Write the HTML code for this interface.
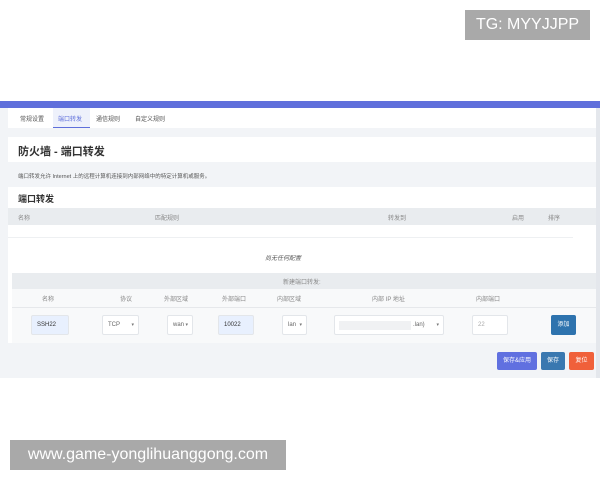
<!DOCTYPE html>
<html><head><meta charset="utf-8"><style>
*{margin:0;padding:0;box-sizing:border-box}
body{width:600px;height:480px;background:#fff;position:relative;overflow:hidden;font-family:"Liberation Sans","Noto Sans CJK SC",sans-serif;color:#333}
.a{position:absolute}
.t{font-size:6px;color:#888;position:absolute;white-space:nowrap}
.inp{position:absolute;height:20px;border:1px solid #e3e6ea;background:#fff;font-size:6px;color:#666;padding:6px 0 0 5px;border-radius:2px}
.blue{background:#e8f0fe;color:#333}
.car{position:absolute;right:4px;top:6px;font-size:5px;color:#777}
.btn{position:absolute;color:#fff;font-size:6px;text-align:center;border-radius:2px}
</style></head><body>
<div class="a" style="left:465px;top:10px;width:125px;height:30px;background:#a9a9a9;color:#fff;font-size:16px;line-height:30px;text-align:center">TG: MYYJJPP</div>
<div class="a" style="left:10px;top:440px;width:276px;height:30px;background:#a9a9a9;color:#fff;font-size:16px;line-height:30px;text-align:center">www.game-yonglihuanggong.com</div>

<div class="a" style="left:0;top:101px;width:600px;height:277px;background:#f2f4f7"></div>
<div class="a" style="left:0;top:101px;width:600px;height:7px;background:#5f6fdb"></div>
<div class="a" style="left:596px;top:108px;width:4px;height:270px;background:#e4e7ec"></div>

<div class="a" style="left:8px;top:108px;width:588px;height:20px;background:#fff"></div>
<div class="a" style="left:53px;top:108px;width:37px;height:20px;background:#eef1fb;border-bottom:1px solid #5f6fdb"></div>
<div class="t" style="left:20px;top:114px;color:#555">常规设置</div>
<div class="t" style="left:58px;top:114px;color:#5f6fdb">端口转发</div>
<div class="t" style="left:96px;top:114px;color:#555">通信规则</div>
<div class="t" style="left:135px;top:114px;color:#555">自定义规则</div>

<div class="a" style="left:8px;top:137px;width:588px;height:25px;background:#fff"></div>
<div class="a" style="left:18px;top:143px;font-size:11px;font-weight:bold;color:#333">防火墙 - 端口转发</div>
<div class="t" style="left:18px;top:172px;font-size:5.5px;color:#555">端口转发允许 Internet 上的远程计算机连接到内部网络中的特定计算机或服务。</div>

<div class="a" style="left:8px;top:187px;width:588px;height:156px;background:#fff"></div>
<div class="a" style="left:18px;top:192px;font-size:9px;font-weight:bold;color:#333">端口转发</div>
<div class="a" style="left:8px;top:208px;width:588px;height:17px;background:#e9ecef"></div>
<div class="t" style="left:18px;top:213px">名称</div>
<div class="t" style="left:155px;top:213px">匹配规则</div>
<div class="t" style="left:388px;top:213px">转发到</div>
<div class="t" style="left:512px;top:213px">启用</div>
<div class="t" style="left:548px;top:213px">排序</div>
<div class="a" style="left:8px;top:237px;width:565px;height:1px;background:#eef0f2"></div>
<div class="t" style="left:265px;top:253px;color:#555;font-style:italic">尚无任何配置</div>
<div class="a" style="left:12px;top:273px;width:584px;height:16px;background:#e9ecef"></div>
<div class="t" style="left:283px;top:277px">新建端口转发:</div>
<div class="a" style="left:12px;top:289px;width:584px;height:54px;background:#f8f9fa"></div>
<div class="t" style="left:42px;top:294px">名称</div>
<div class="t" style="left:120px;top:294px">协议</div>
<div class="t" style="left:164px;top:294px">外部区域</div>
<div class="t" style="left:222px;top:294px">外部端口</div>
<div class="t" style="left:277px;top:294px">内部区域</div>
<div class="t" style="left:372px;top:294px">内部 IP 地址</div>
<div class="t" style="left:476px;top:294px">内部端口</div>
<div class="a" style="left:12px;top:307px;width:584px;height:1px;background:#e6e8eb"></div>
<div class="inp blue" style="left:31px;top:315px;width:38px">SSH22</div>
<div class="inp" style="left:102px;top:315px;width:37px">TCP<span class="car">▾</span></div>
<div class="inp" style="left:167px;top:315px;width:26px">wan<span class="car">▾</span></div>
<div class="inp blue" style="left:218px;top:315px;width:36px">10022</div>
<div class="inp" style="left:282px;top:315px;width:25px">lan<span class="car">▾</span></div>
<div class="inp" style="left:334px;top:315px;width:110px"><span class="a" style="left:4px;top:5px;width:72px;height:9px;background:#f0f1f3"></span><span class="a" style="left:78px;top:6px">.lan)</span><span class="car">▾</span></div>
<div class="inp" style="left:472px;top:315px;width:36px;color:#aaa">22</div>
<div class="btn" style="left:551px;top:315px;width:25px;height:20px;line-height:20px;background:#2e73ae">添加</div>
<div class="btn" style="left:497px;top:352px;width:40px;height:18px;line-height:18px;background:#6070e0">保存&amp;应用</div>
<div class="btn" style="left:541px;top:352px;width:24px;height:18px;line-height:18px;background:#3a78b0">保存</div>
<div class="btn" style="left:569px;top:352px;width:25px;height:18px;line-height:18px;background:#f0603a">复位</div>
</body></html>
